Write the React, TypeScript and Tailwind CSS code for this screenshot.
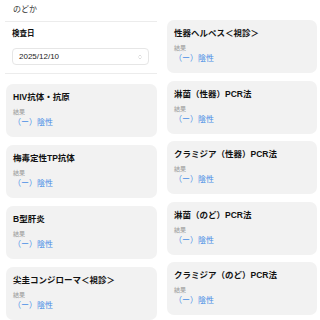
import React from 'react';
import { ChevronsUpDown } from 'lucide-react';

const font = { fontFamily: '"Liberation Sans", "Noto Sans CJK JP", sans-serif' };

const leftTests = ['HIV抗体・抗原', '梅毒定性TP抗体', 'B型肝炎', '尖圭コンジローマ＜視診＞'];
const rightTests = [
	'性器ヘルペス＜視診＞',
	'淋菌（性器）PCR法',
	'クラミジア（性器）PCR法',
	'淋菌（のど）PCR法',
	'クラミジア（のど）PCR法',
];

function ResultCard({ title }: { title: string }) {
	return (
		<div className="rounded-[7px] bg-[#f2f2f2] px-[7px] pt-[7px] pb-[9px]">
			<div className="text-[8.5px] font-bold leading-[12px] text-[#111] whitespace-nowrap">{title}</div>
			<div className="mt-[5px] text-[6px] leading-[8px] text-[#999]">結果</div>
			<div className="mt-[1px] text-[8px] leading-[11px] text-[#4a8fe6]">（ー）陰性</div>
		</div>
	);
}

export default function App() {
	return (
		<div className="flex h-[320px] w-[320px] overflow-hidden bg-white" style={font}>
			{/* Left column */}
			<div className="ml-[5px] flex w-[152px] flex-col">
				<div className="h-[22px] pl-[8px] pt-[4px] text-[8px] leading-[12px] text-[#333]">のどか</div>
				<div className="border-t border-[#ececec]" />
				<div className="pl-[7px] pr-[8px] pb-[8px]">
					<div className="mt-[6px] text-[7.5px] font-bold leading-[12px] text-[#111]">検査日</div>
					<div className="mt-[8px] flex h-[17px] items-center justify-between rounded-[4px] border border-[#e6e6e6] bg-white pl-[6px] pr-[5px]">
						<span className="text-[8px] text-[#222]">2025/12/10</span>
						<ChevronsUpDown className="h-[6px] w-[6px] text-[#bbb]" strokeWidth={2} />
					</div>
				</div>
				<div className="border-t border-[#ececec]" />
				<div className="ml-[1px] mt-[10px] flex flex-col gap-[8px]">
					{leftTests.map((t) => (
						<ResultCard key={t} title={t} />
					))}
				</div>
			</div>

			{/* Right column */}
			<div className="ml-[10px] flex w-[150px] flex-col gap-[7.5px] pt-[20px]">
				{rightTests.map((t) => (
					<ResultCard key={t} title={t} />
				))}
			</div>
		</div>
	);
}
